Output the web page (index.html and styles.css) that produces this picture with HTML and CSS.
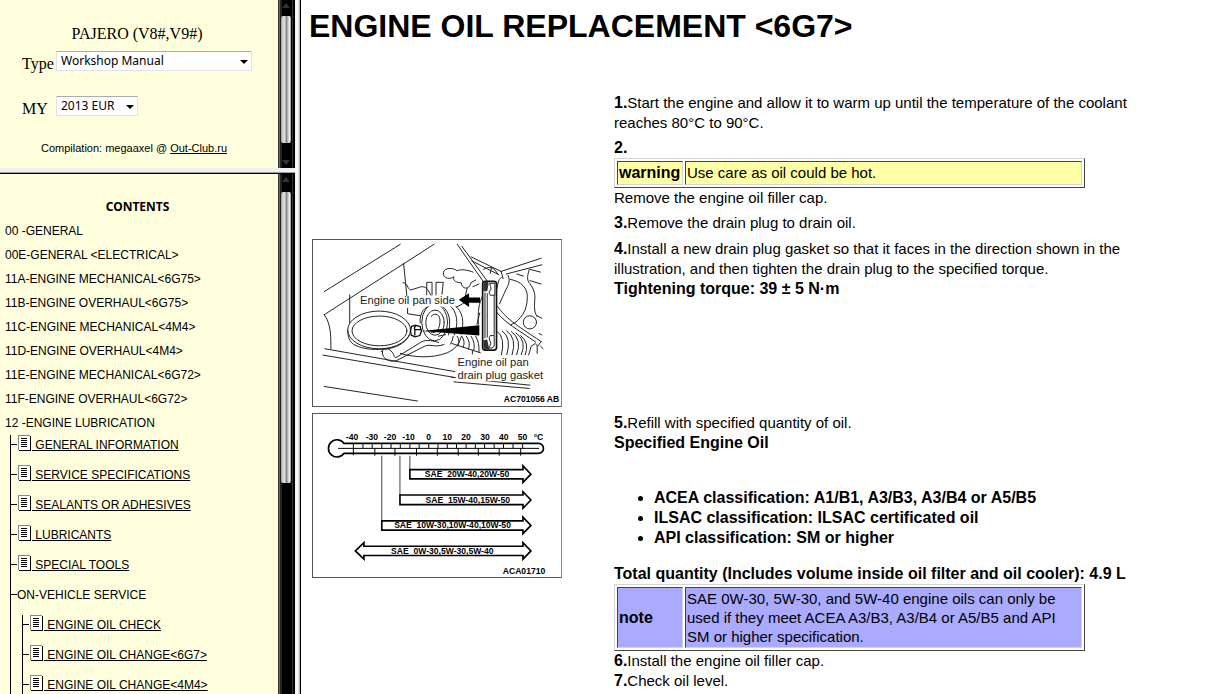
FILE: index.html
```html
<!DOCTYPE html>
<html lang="en">
<head>
<meta charset="utf-8">
<title>Engine oil replacement &lt;6G7&gt;</title>
<link rel="stylesheet" href="styles.css">
</head>
<body>
<svg class="defs" width="0" height="0" aria-hidden="true">
  <symbol id="doc" viewBox="0 0 13 16">
    <rect x="0" y="0" width="12" height="15" fill="#888"/>
    <rect x="1" y="1" width="11" height="14" fill="#fff"/>
    <path d="M12 1h1v15H1v-1h11z" fill="#000"/>
    <path d="M3 3.500h6M3 5.500h6M3 7.500h6M3 9.500h6M3 11.500h6" stroke="#000"/>
  </symbol>
</svg>
<div class="frames">
  <div class="side">
    <section class="pane pane-top">
      <div class="pane-body selector">
        <p class="model">PAJERO (V8#,V9#)</p>
        <form class="fields">
          <label for="type">Type</label>
          <span class="pick pick-wide"><select id="type"><option>Workshop Manual</option></select></span>
          <label for="year">MY</label>
          <span class="pick pick-narrow"><select id="year"><option>2013 EUR</option></select></span>
        </form>
        <p class="credit">Compilation: megaaxel @ <a href="#">Out-Club.ru</a></p>
      </div>
      <div class="bar" aria-hidden="true"><i class="arrow up"></i><i class="thumb"></i><i class="arrow down"></i></div>
    </section>
    <nav class="pane pane-bottom">
      <div class="pane-body contents">
        <h2>CONTENTS</h2>
        <ul class="groups">
          <li>00 -GENERAL</li>
          <li>00E-GENERAL &lt;ELECTRICAL&gt;</li>
          <li>11A-ENGINE MECHANICAL&lt;6G75&gt;</li>
          <li>11B-ENGINE OVERHAUL&lt;6G75&gt;</li>
          <li>11C-ENGINE MECHANICAL&lt;4M4&gt;</li>
          <li>11D-ENGINE OVERHAUL&lt;4M4&gt;</li>
          <li>11E-ENGINE MECHANICAL&lt;6G72&gt;</li>
          <li>11F-ENGINE OVERHAUL&lt;6G72&gt;</li>
          <li>12 -ENGINE LUBRICATION
            <ul class="tree">
              <li><a href="#"><svg class="doc"><use href="#doc"/></svg><span>&nbsp;GENERAL INFORMATION</span></a></li>
              <li><a href="#"><svg class="doc"><use href="#doc"/></svg><span>&nbsp;SERVICE SPECIFICATIONS</span></a></li>
              <li><a href="#"><svg class="doc"><use href="#doc"/></svg><span>&nbsp;SEALANTS OR ADHESIVES</span></a></li>
              <li><a href="#"><svg class="doc"><use href="#doc"/></svg><span>&nbsp;LUBRICANTS</span></a></li>
              <li><a href="#"><svg class="doc"><use href="#doc"/></svg><span>&nbsp;SPECIAL TOOLS</span></a></li>
              <li><span class="branch">ON-VEHICLE SERVICE</span>
                <ul class="tree">
                  <li><a href="#"><svg class="doc"><use href="#doc"/></svg><span>&nbsp;ENGINE OIL CHECK</span></a></li>
                  <li><a href="#"><svg class="doc"><use href="#doc"/></svg><span>&nbsp;ENGINE OIL CHANGE&lt;6G7&gt;</span></a></li>
                  <li><a href="#"><svg class="doc"><use href="#doc"/></svg><span>&nbsp;ENGINE OIL CHANGE&lt;4M4&gt;</span></a></li>
                </ul>
              </li>
            </ul>
          </li>
        </ul>
      </div>
      <div class="bar" aria-hidden="true"><i class="arrow up"></i><i class="thumb thumb-long"></i></div>
    </nav>
  </div>
  <main class="page">
    <h1>ENGINE OIL REPLACEMENT &lt;6G7&gt;</h1>
    <div class="steps">
      <div class="text first">
        <p><b>1.</b>Start the engine and allow it to warm up until the temperature of the coolant reaches 80°C to 90°C.</p>
        <p class="tight"><b>2.</b></p>
        <table class="box warning"><tr><th>warning</th><td>Use care as oil could be hot.</td></tr></table>
        <p>Remove the engine oil filler cap.</p>
        <p class="tight"><b>3.</b>Remove the drain plug to drain oil.</p>
      </div>

      <svg class="figure fig-pan" viewBox="6 9 750 501" role="img" aria-label="Drain plug gasket">
        <g fill="none" stroke="#222" stroke-width="3" stroke-linejoin="round" stroke-linecap="round">
          <path d="M40 165L270 22M40 235L372 22M40 235C62 262 60 310 60 338M36 357L430 424M42 338L435 407M432 438L660 458M425 424L662 448M40 452L322 496"/>
          <path d="M117 175v85M280 80L290 180M278 138c16 0 12 20 24 22l26-8c16-6 26 4 34 24M350 175v-38h16v38M378 175v-38h22l-4 36M292 216v16l38 6"/>
          <ellipse cx="206" cy="281" rx="95" ry="57"/>
          <ellipse cx="207" cy="284" rx="83" ry="45"/>
          <path d="M111 281c0 20 4 34 18 44c18 10 46 16 78 15c45 0 75-16 90-42"/>
          <path d="M212 347c10-12 22-12 30-2c12 8 6 24 18 18l74-46c14-8 40-2 52 2M216 346c-4 24 28 36 46 26l82-42c18-8 30 6 58-5M270 352c40 12 96 16 142-2c22-10 36-24 42-48"/>
          <ellipse cx="374" cy="258" rx="39" ry="56"/>
          <ellipse cx="375" cy="259" rx="28" ry="38"/>
          <path d="M363 240c14-14 28-4 27 14c0 24-12 40-27 34M330 260c-2-34 14-50 40-56M400 212c18 14 24 40 16 84M418 206c26 18 28 58 16 90M434 206c26 20 30 50 20 88M385 300l22-5"/>
          <path d="M442 22L522 136M456 28L532 132M490 106c-16-6-36-10-48-4c-12-10-40-10-42 6c-2 20 26 20 32 12c-4 14 10 18 22 18c2 20 24 24 30 0l14-8M440 212l22-12l10-45M508 142l-18 8"/>
          <path d="M484 60L575 104M486 72L568 114M575 104L696 64M590 112L698 84M575 104l6 22M546 92l-4 18M522 98c16-12 34-6 42 14M596 116c8 18 0 30-6 42c-8 18-14 30-20 44M576 122c-12 8-10 20-14 34"/>
          <path d="M602 128c34 6 54 26 52 56c0 36-18 68-50 82M660 98c-4 16-8 26-2 38c10 12 20 28 19 48c-1 20-4 40 6 56M622 112l20 6M662 132l34 10M662 98l32 8M684 238l14 8"/>
          <circle cx="662" cy="258" r="20"/>
          <path d="M564 210C590 246 614 262 696 316M562 228C590 262 620 276 680 318M690 292l8 4M696 316l-10 14l-8-8l-12 8l-8 28M684 330v22M694 330l8 8"/>
          <path d="M564 286q24 18 12 70M578 284q30 20 14 72M592 284q32 22 16 72M606 286q34 24 16 70M620 290q34 24 16 66M634 298q28 22 14 58"/>
          <path d="M430 300q-2 16-8 24M442 300q10 14 2 30M456 300q12 16 4 34M470 300q14 20 6 40M484 300q14 20 8 44M498 300q12 20 10 48M426 322l86 28"/>
          <path d="M518 180c-10 20-14 44-12 84M510 230l-8 34M488 344v10"/>
        </g>
        <path d="M447 190l31-20v13h33v16h-33v13zM334 284L509 267v31z"/>
        <path d="M304 270l12-3l14 4l4 13l-5 14l-14 4l-12-5q-4-14 1-27zM316 268q-5 8-2 12h18M314 280v18" fill="#fff" stroke="#111" stroke-width="4"/>
        <rect x="519" y="134" width="42" height="208" rx="8" fill="#fff" stroke="#111" stroke-width="5"/>
        <path d="M526 168v138" stroke="#777" stroke-width="5"/>
        <path d="M533 170v134M554 176v120" stroke="#222" stroke-width="3"/>
        <path d="M521 140q14-12 16 2l-4 22h-12zM521 312l12-2l6 30h-12q-6-4-6-10z" fill="#333"/>
        <path d="M540 140h16v36h-14q-4-4-3-12q10-2 1-24zM554 298h-12q-5 5-2 14q8 8-3 24q12 2 17-6z" fill="#fff" stroke="#222" stroke-width="3"/>
        <rect x="146" y="178" width="292" height="32" fill="#fff"/>
        <rect x="438" y="358" width="266" height="78" fill="#fff"/>
        <g class="caption">
          <text x="148" y="203">Engine oil pan side</text>
          <text x="443" y="389">Engine oil pan</text>
          <text x="443" y="430">drain plug gasket</text>
        </g>
        <text class="code" x="583" y="500">AC701056 AB</text>
      </svg>
      <div class="text">
        <p><b>4.</b>Install a new drain plug gasket so that it faces in the direction shown in the illustration, and then tighten the drain plug to the specified torque.<br><b>Tightening torque: 39 ± 5 N·m</b></p>
      </div>

      <svg class="figure fig-temp" viewBox="6 12 750 495" role="img" aria-label="Oil viscosity by temperature">
        <path d="M100 101H688a15 15 0 0 1 0 30H100A26 26 0 1 1 100 101Z" fill="#fff" stroke="#000" stroke-width="5"/>
        <path d="M82 116H690M128 101v36M157 101v15M185 101v15M214 101v15M242 101v15M270 101v15M299 101v15M327 101v15M356 101v15M384 101v15M412 101v15M440 101v15M469 101v15M497 101v15M525 101v15M554 101v15M582 101v15M611 101v15M640 101v15M193 116v22M254 116v22M319 116v22M382 116v22M445 116v22M506 116v22M569 116v22M634 116v22" fill="none" stroke="#000" stroke-width="3"/>
        <path d="M299 138v42M269 138v119M214 138v196" stroke="#444" stroke-width="3"/>
        <g fill="#fff" stroke="#000" stroke-width="5">
          <path d="M299 180H641V169L665 194L641 219V208H299Z"/>
          <path d="M269 257H641V247L665 272L641 297V286H269Z"/>
          <path d="M214 335H641V324L665 349L641 374V363H214Z"/>
          <path d="M134 426L160 401V412H641V401L665 426L641 451V440H160V451Z"/>
        </g>
        <g class="scale">
          <text x="124" y="91">-40</text><text x="184" y="91">-30</text><text x="239" y="91">-20</text><text x="295" y="91">-10</text><text x="356" y="91">0</text><text x="412" y="91">10</text><text x="469" y="91">20</text><text x="526" y="91">30</text><text x="583" y="91">40</text><text x="640" y="91">50</text><text x="688" y="91">°C</text>
          <text x="472" y="203">SAE&nbsp; 20W-40,20W-50</text>
          <text x="474" y="281">SAE&nbsp; 15W-40,15W-50</text>
          <text x="428" y="358">SAE&nbsp; 10W-30,10W-40,10W-50</text>
          <text x="397" y="435">SAE&nbsp; 0W-30,5W-30,5W-40</text>
        </g>
        <text class="code" x="580" y="496">ACA01710</text>
      </svg>
      <div class="text">
        <p><b>5.</b>Refill with specified quantity of oil.<br><b>Specified Engine Oil</b></p>
        <ul class="specs">
          <li>ACEA classification: A1/B1, A3/B3, A3/B4 or A5/B5</li>
          <li>ILSAC classification: ILSAC certificated oil</li>
          <li>API classification: SM or higher</li>
        </ul>
        <p class="tight"><b>Total quantity (Includes volume inside oil filter and oil cooler): 4.9 L</b></p>
        <table class="box note"><tr><th>note</th><td>SAE 0W-30, 5W-30, and 5W-40 engine oils can only be used if they meet ACEA A3/B3, A3/B4 or A5/B5 and API SM or higher specification.</td></tr></table>
        <p class="tight"><b>6.</b>Install the engine oil filler cap.</p>
        <p><b>7.</b>Check oil level.</p>
      </div>
    </div>
  </main>
</div>
</body>
</html>
```
FILE: styles.css
```css
* { box-sizing: border-box; }
body { margin: 0; background: #fff; color: #000; font-family: "Liberation Sans", Arial, sans-serif; }
p, h1, h2, ul { margin: 0; padding: 0; }
ul { list-style: none; }
a { color: inherit; }
.defs { position: absolute; }

.frames { display: flex; height: 100vh; overflow: hidden; }
.side {
  display: flex;
  flex-direction: column;
  flex: 0 0 301px;
  border-right: 1px solid #000;
  background: linear-gradient(90deg, #f0f0f0 295px, #f4f4f4 296px, #fff 298px, #b8b8b8 299px);
}
.pane { display: flex; width: 295px; }
.pane-top { flex: 0 0 168px; }
.pane-bottom { flex: 1; min-height: 0; margin-top: 5px; border-top: 1px solid #000; box-shadow: 0 -1px #a0a0a0; }
.pane-body { flex: 1; background: #ffffde; overflow: hidden; }

.bar {
  display: flex;
  flex-direction: column;
  align-items: center;
  width: 17px;
  padding-right: 1px;
  background: linear-gradient(90deg, #333 0 1px, #666 1px 2px, #222 2px 4px, #000 4px 14px, #333 14px 15px, #000 15px);
}
.thumb {
  flex: 1;
  width: 10px;
  border-radius: 2px;
  background: linear-gradient(90deg, #999, #d8d8d8 20%, #ddd 35%, #888 55%, #b0b0b0 65%, #eee 85%, #888);
}
.thumb-long { flex: 0 0 291px; }
.arrow { position: relative; height: 16px; width: 8px; }
.down { height: 25px; }
.pane-bottom .arrow { height: 18px; }
.arrow::before { content: ""; position: absolute; left: 0; top: 3px; border: 4px solid transparent; border-top: 0; border-bottom: 5px solid #333; }
.down::before { top: auto; bottom: 3px; border-bottom: 0; border-top: 5px solid #333; }

.selector { padding: 24px 0 0 22px; }
.model { font: 16px/20px "Liberation Serif", "Times New Roman", serif; text-align: center; padding-right: 26px; }
.fields { display: grid; grid-template-columns: 34px 1fr; row-gap: 25px; padding-top: 7px; }
.fields label { font: 16px/20px "Liberation Serif", "Times New Roman", serif; padding-top: 3px; height: 20px; }
.pick { position: relative; height: 20px; }
.pick-wide { width: 196px; }
.pick-narrow { width: 82px; }
.pick::after { content: ""; position: absolute; right: 4px; top: 9px; border: 4px solid transparent; border-top-color: #000; border-bottom: 0; pointer-events: none; }
select {
  appearance: none;
  display: block;
  width: 100%;
  height: 20px;
  padding: 0 4px;
  border: 1px solid #e2e3ea;
  border-top-color: #abadb3;
  border-radius: 1px;
  background: #fff;
  color: #000;
  font: 12px/18px "Noto Sans", Tahoma, sans-serif;
}
.credit { padding: 24px 0 0 19px; font-size: 11px; line-height: 16px; white-space: nowrap; }

.contents { padding: 23px 0 0 5px; font-size: 12px; }
.contents h2 { padding: 0 8px 2px 0; font: bold 12px/20px "Noto Sans", Tahoma, sans-serif; text-align: center; }
.groups > li { line-height: 24px; white-space: nowrap; }
.tree { margin-left: 5px; border-left: 1px solid #000; }
.tree > li { position: relative; line-height: 20px; padding: 0 0 10px 6px; }
.tree > li::before { content: ""; position: absolute; left: 0; top: 9px; width: 6px; border-top: 1px solid #000; }
.tree a { display: inline-flex; align-items: flex-start; gap: 1px; height: 20px; padding-left: 1px; vertical-align: top; text-decoration: none; }
.tree a span { text-decoration: underline; }
.branch { display: block; }
.tree .tree { margin: 10px 0 0 5px; }
.doc { width: 13px; height: 16px; }

.page { flex: 1; min-width: 0; padding: 6px 8px 0 8px; overflow: hidden; }
h1 { font-size: 32px; line-height: 40px; }
.steps { display: grid; grid-template-columns: 250px minmax(0, 1fr); column-gap: 52px; row-gap: 6px; padding: 47px 48px 0 3px; align-items: start; }
.text { font-size: 15px; line-height: 20px; }
.text b, .text th { font-size: 16px; line-height: 19px; }
.first { grid-column: 2; }
.text p { margin-bottom: 5px; }
.text p.tight { margin-bottom: 0; }
.figure { display: block; width: 100%; border: 1px solid #555; border-right-color: #888; }
.specs { padding: 30px 0 16px 40px; list-style: disc; font-size: 16px; font-weight: bold; }
.box { width: 471px; max-width: 100%; border: 1px solid; border-color: #d4d4d4 #444 #444 #d4d4d4; border-spacing: 2px; line-height: 19px; }
.box th, .box td { padding: 1px; border: 1px solid; border-color: #444 #d4d4d4 #d4d4d4 #444; text-align: left; }
.warning th, .warning td { background: #ffffa5; line-height: 20px; }
.box th { width: 66px; }
.note th, .note td { background: #aaaaff; }
.caption { font-size: 34px; fill: #222; }
.code { font-size: 26px; font-weight: bold; }
.scale { font-size: 26px; font-weight: bold; text-anchor: middle; }
```
